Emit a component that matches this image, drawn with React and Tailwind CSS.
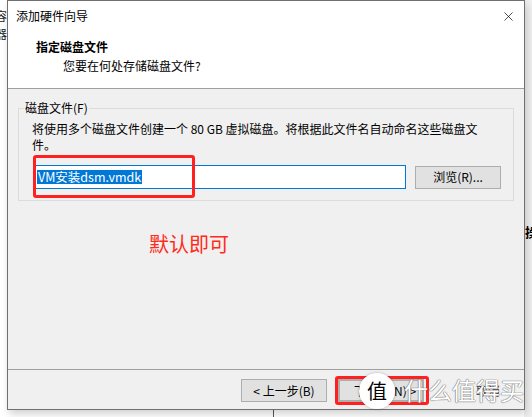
import { X } from "lucide-react";

function Button({ children, className = "" }) {
  return (
    <div
      className={`flex h-[23px] w-[86px] items-center justify-center border border-[#adadad] bg-[#e1e1e1] text-[12px] leading-none text-black ${className}`}
    >
      {children}
    </div>
  );
}

export default function App() {
  return (
    <div className="relative h-[417px] w-[532px] overflow-hidden bg-white font-['Noto_Sans_CJK_SC',sans-serif] text-[12px] text-black">
      {/* background windows */}
      <div className="absolute left-[-5px] top-[7px] text-[12px] leading-[18px] text-[#222]">
        <div>容</div>
        <div>器</div>
      </div>
      <div className="absolute left-[524px] top-0 h-full w-[8px] bg-[#f0f0f0]">
        <div className="absolute left-[1px] top-[224px] text-[13px] font-bold leading-[16px]">操</div>
      </div>
      <div className="absolute left-[273px] top-[405px] h-[12px] w-px bg-[#555]" />

      {/* dialog */}
      <div className="absolute left-[7px] top-0 flex h-[410px] w-[518px] flex-col border border-[#6f6f6f] bg-[#f0f0f0] shadow-[2px_4px_8px_rgba(0,0,0,0.18)]">
        {/* header */}
        <div className="h-[88px] border-b border-[#a0a0a0] bg-white">
          <div className="flex h-[30px] items-center justify-between pl-[8px] pr-[8px]">
            <span className="leading-none">添加硬件向导</span>
            <X size={15} strokeWidth={1.1} className="text-black" />
          </div>
          <div className="mt-[8px] pl-[28px] font-bold leading-[16px]">指定磁盘文件</div>
          <div className="mt-[3px] pl-[55px] leading-[16px]">您要在何处存储磁盘文件?</div>
        </div>

        {/* body */}
        <div className="flex flex-1 flex-col">
          <div className="relative ml-[10px] mt-[19px] w-[496px] border border-[#dcdcdc] pb-[11px] pl-[13px] pt-[12px]">
            <span className="absolute left-[5px] top-[-9px] bg-[#f0f0f0] px-[1px] leading-[16px]">磁盘文件(F)</span>
            <div className="leading-[16px]">
              将使用多个磁盘文件创建一个 80 GB 虚拟磁盘。将根据此文件名自动命名这些磁盘文
              <br />
              件。
            </div>
            <div className="mt-[12px] flex items-center gap-[9px] pl-[1px]">
              <div className="flex h-[24px] w-[373px] items-center border border-[#0078d7] bg-white pl-[3px]">
                <span className="bg-[#0078d7] px-[1px] text-[12.5px] leading-[14px] text-white">VM安装dsm.vmdk</span>
              </div>
              <Button>浏览(R)...</Button>
            </div>
          </div>

          <div className="mt-[31px] pl-[141px] text-[20px] leading-[24px] text-[#ff2a1a]">默认即可</div>
        </div>

        {/* footer */}
        <div className="flex h-[40px] items-start gap-[11px] border-t border-[#a0a0a0] pl-[233px] pt-[9px]">
          <Button>&lt; 上一步(B)</Button>
          <Button className="border-2 border-[#0078d7] pl-[8px] text-[#555]">下一步(N) &gt;</Button>
          <div className="flex h-[23px] w-[86px] items-center justify-center pl-[20px] text-[12px] leading-none text-[#333]">取消</div>
        </div>
      </div>

      {/* annotations */}
      <div className="absolute left-[33px] top-[155px] h-[43px] w-[162px] rounded-[3px] border-[3px] border-[#ff2020]" />
      <div className="absolute left-[335px] top-[376px] h-[29px] w-[94px] rounded-[3px] border-[3px] border-[#ff2020]" />

      {/* watermark */}
      <div className="absolute left-[359px] top-[373px] flex h-[36px] w-[36px] items-center justify-center rounded-full bg-white text-[20px] leading-none text-black shadow-[0_0_3px_rgba(0,0,0,0.25)]">
        值
      </div>
      <div className="absolute left-[404px] top-[375px] whitespace-nowrap text-[24px] leading-[30px] text-white [text-shadow:0_0_1px_#777,0_0_1px_#777,0_0_1px_#777]">
        什么值得买
      </div>
    </div>
  );
}
